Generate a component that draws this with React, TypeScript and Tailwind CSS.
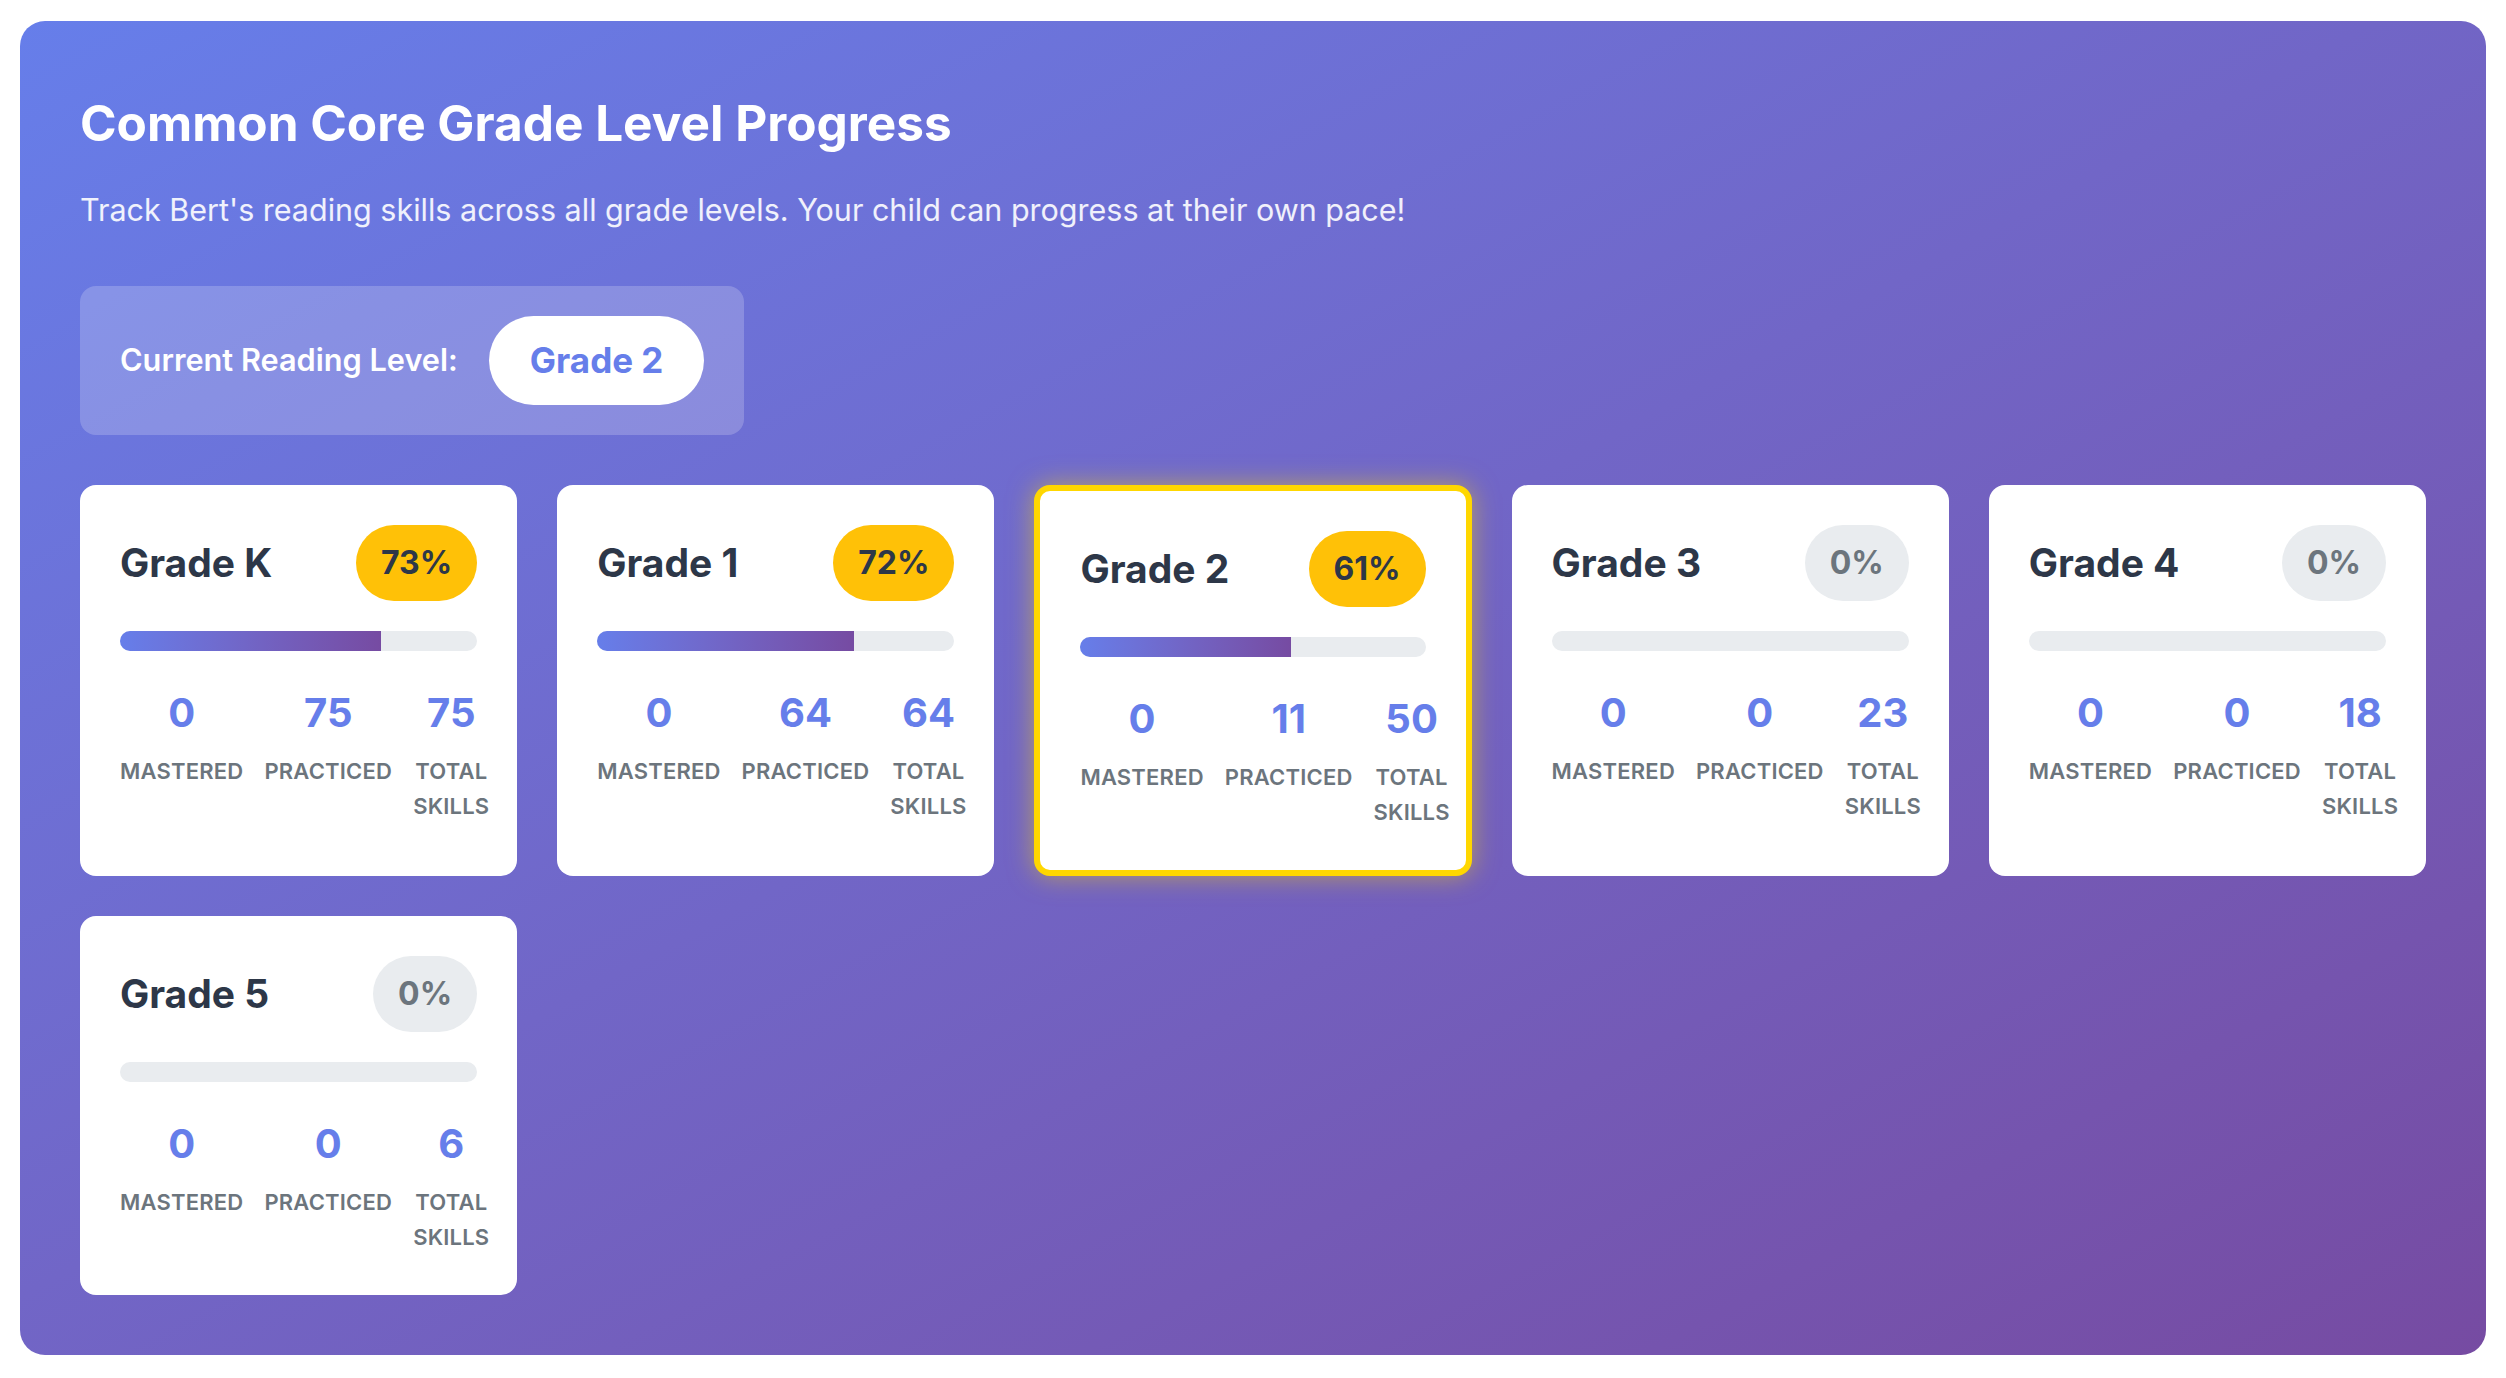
import React from 'react'

interface GradeInfo {
  name: string
  percent: number
  mastered: number
  practiced: number
  total: number
  current?: boolean
}

const grades: GradeInfo[] = [
  { name: 'Grade K', percent: 73, mastered: 0, practiced: 75, total: 75 },
  { name: 'Grade 1', percent: 72, mastered: 0, practiced: 64, total: 64 },
  { name: 'Grade 2', percent: 61, mastered: 0, practiced: 11, total: 50, current: true },
  { name: 'Grade 3', percent: 0, mastered: 0, practiced: 0, total: 23 },
  { name: 'Grade 4', percent: 0, mastered: 0, practiced: 0, total: 18 },
  { name: 'Grade 5', percent: 0, mastered: 0, practiced: 0, total: 6 },
]

function Stat({ value, label }: { value: number; label: string }) {
  return (
    <div className="text-center">
      <div className="text-[40px] leading-[48px] font-bold text-[#667eea]">{value}</div>
      <div className="mt-[17px] text-[22px] leading-[35px] font-semibold uppercase tracking-[0.2px] text-[#6c757d]">
        {label}
      </div>
    </div>
  )
}

function GradeCard({ grade }: { grade: GradeInfo }) {
  const started = grade.percent > 0
  return (
    <div
      className={`rounded-[16px] bg-white p-[40px] ${
        grade.current ? 'border-[6px] border-[#ffd700] shadow-[0_0_26px_rgba(255,215,0,0.5)]' : ''
      }`}
    >
      {/* header */}
      <div className="mb-[30px] flex items-center justify-between">
        <h3 className="text-[39px] leading-[46px] font-bold text-[#2d3748]">{grade.name}</h3>
        <span
          className={`flex h-[76px] items-center rounded-full px-[25px] text-[32px] font-bold ${
            started ? 'bg-[#ffc107] text-[#2d3748]' : 'bg-[#e9ecef] text-[#6c757d]'
          }`}
        >
          {grade.percent}%
        </span>
      </div>

      {/* progress bar */}
      <div className="h-[20px] overflow-hidden rounded-full bg-[#e9ecef]">
        <div
          className="h-full bg-gradient-to-r from-[#667eea] to-[#764ba2]"
          style={{ width: `${grade.percent}%` }}
        />
      </div>

      {/* stats */}
      <div className="mt-[38px] grid grid-cols-[repeat(3,1fr)] gap-[21px]">
        <Stat value={grade.mastered} label="Mastered" />
        <Stat value={grade.practiced} label="Practiced" />
        <Stat value={grade.total} label="Total Skills" />
      </div>
    </div>
  )
}

export default function App() {
  return (
    <div className="min-h-screen bg-white px-[20px] pt-[21px] pb-[22px] font-['Inter',sans-serif]">
      <div className="rounded-[25px] bg-gradient-to-br from-[#667eea] to-[#764ba2] px-[60px] pt-[72px] pb-[60px]">
        <h1 className="text-[49.5px] leading-[61px] font-bold text-white">Common Core Grade Level Progress</h1>
        <p className="mt-[33px] text-[30.5px] leading-[45px] text-white/90">
          Track Bert's reading skills across all grade levels. Your child can progress at their own pace!
        </p>

        <div className="mt-[54px] inline-flex items-center gap-[31px] rounded-[16px] bg-white/20 px-[40px] py-[30px]">
          <span className="text-[30.7px] font-semibold text-white">Current Reading Level:</span>
          <span className="flex h-[89px] items-center rounded-full bg-white px-[41px] text-[35px] font-bold text-[#667eea]">
            Grade 2
          </span>
        </div>

        <div className="mt-[50px] grid grid-cols-5 gap-[40px]">
          {grades.map((g) => (
            <GradeCard key={g.name} grade={g} />
          ))}
        </div>
      </div>
    </div>
  )
}
